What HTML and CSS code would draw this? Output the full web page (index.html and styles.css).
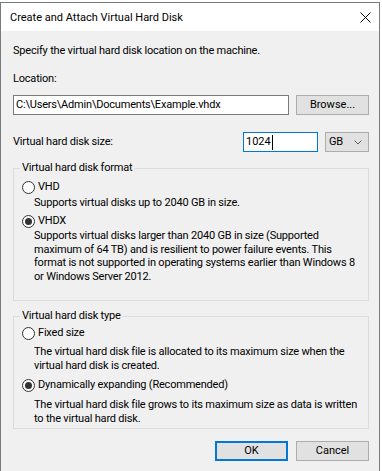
FILE: index.html
```html
<!DOCTYPE html>
<html>
<head>
<meta charset="utf-8">
<link rel="stylesheet" href="styles.css">
</head>
<body>
<div class="window">
  <div class="titlebar">
    <span class="title">Create and Attach Virtual Hard Disk</span>
    <svg class="close" width="11" height="11" viewBox="0 0 11 11"><path d="M0.5 0.5 L10.5 10.5 M10.5 0.5 L0.5 10.5" stroke="#000" stroke-width="1" fill="none"/></svg>
  </div>
  <div class="content">
    <p class="intro">Specify the virtual hard disk location on the machine.</p>
    <div class="lbl">Location:</div>
    <div class="row loc-row">
      <div class="textbox loc">C:\Users\Admin\Documents\Example.vhdx</div>
      <div class="btn browse">Browse...</div>
    </div>
    <div class="row size-row">
      <span class="size-label">Virtual hard disk size:</span>
      <div class="textbox size">1024<span class="caret"></span></div>
      <div class="combo"><span>GB</span><svg width="8" height="5" viewBox="0 0 8 5"><path d="M0.5 0.5 L4 4 L7.5 0.5" stroke="#606060" stroke-width="1" fill="none"/></svg></div>
    </div>
    <fieldset class="group format">
      <legend>Virtual hard disk format</legend>
      <div class="opt first"><span class="radio"></span><span>VHD</span></div>
      <div class="desc d1">Supports virtual disks up to 2040 GB in size.</div>
      <div class="opt second"><span class="radio checked"></span><span>VHDX</span></div>
      <div class="desc d2">Supports virtual disks larger than 2040 GB in size (Supported<br>maximum of 64 TB) and is resilient to power failure events. This<br>format is not supported in operating systems earlier than Windows 8<br>or Windows Server 2012.</div>
    </fieldset>
    <fieldset class="group type">
      <legend>Virtual hard disk type</legend>
      <div class="opt first"><span class="radio"></span><span>Fixed size</span></div>
      <div class="desc d3">The virtual hard disk file is allocated to its maximum size when the<br>virtual hard disk is created.</div>
      <div class="opt third"><span class="radio checked"></span><span>Dynamically expanding (Recommended)</span></div>
      <div class="desc d4">The virtual hard disk file grows to its maximum size as data is written<br>to the virtual hard disk.</div>
    </fieldset>
    <div class="buttons">
      <div class="btn ok">OK</div>
      <div class="btn">Cancel</div>
    </div>
  </div>
</div>
</body>
</html>
```
FILE: styles.css
```css
html, body {
  margin: 0;
  padding: 0;
  background: #ffffff;
}
body {
  padding-top: 2px;
  font-family: Roboto, "Liberation Sans", Arial, sans-serif;
  font-size: 11px;
  color: #000;
}
.window {
  width: 380px;
  box-sizing: border-box;
  border: 1px solid #7a7a7a;
  border-bottom: 2px solid #6a6a6a;
  background: #f0f0f0;
}
.titlebar {
  height: 28px;
  background: #fff;
  display: flex;
  align-items: center;
  justify-content: space-between;
  padding: 0 8px 0 9px;
}
.title {
  line-height: 14px;
  padding-top: 1px;
}
.close {
  display: block;
}
.content {
  padding: 0 10px 10px 12px;
  letter-spacing: -0.2px;
}
.intro {
  margin: 13px 0 0;
  line-height: 14px;
  white-space: nowrap;
}
.lbl {
  margin-top: 14px;
  line-height: 14px;
}
.row {
  display: flex;
  align-items: center;
}
.loc-row {
  margin-top: 9px;
  gap: 7px;
}
.textbox {
  box-sizing: border-box;
  height: 20px;
  border: 1px solid #7a7a7a;
  background: #fff;
  line-height: 18px;
  padding: 0 2px;
  white-space: nowrap;
  overflow: hidden;
}
.loc {
  width: 276px;
}
.btn {
  box-sizing: border-box;
  width: 73px;
  height: 20px;
  border: 1px solid #adadad;
  background: #e1e1e1;
  text-align: center;
  line-height: 18px;
  letter-spacing: 0;
}
.size-row {
  margin-top: 17px;
}
.size-label {
  flex: 1;
  line-height: 14px;
}
.size {
  width: 75px;
  border-color: #0078d7;
  display: flex;
  align-items: center;
  letter-spacing: 0;
}
.caret {
  display: inline-block;
  width: 1px;
  height: 15px;
  background: #000;
  margin-left: 1px;
}
.combo {
  box-sizing: border-box;
  width: 44px;
  height: 20px;
  margin-left: 7px;
  border: 1px solid #adadad;
  background: #e1e1e1;
  display: flex;
  align-items: center;
  justify-content: space-between;
  padding: 0 6px 0 3px;
  line-height: 18px;
}
.combo svg {
  display: block;
}
.group {
  margin: 9px 0 0;
  border: 1px solid #dcdcdc;
  padding: 5px 8px 17px 8px;
  min-width: 0;
}
.group legend {
  padding: 0 2px;
  margin-left: -2px;
  line-height: 14px;
}
.type {
  margin-top: 8px;
  padding-top: 3px;
  padding-bottom: 3px;
}
.opt {
  display: flex;
  align-items: center;
  line-height: 14px;
  gap: 3px;
}
.radio {
  box-sizing: border-box;
  width: 13px;
  height: 13px;
  border: 1px solid #333;
  border-radius: 50%;
  background: #fff;
  display: flex;
  align-items: center;
  justify-content: center;
}
.radio.checked::after {
  content: "";
  width: 7px;
  height: 7px;
  border-radius: 50%;
  background: #333;
}
.desc {
  padding-left: 12px;
  line-height: 13.5px;
  white-space: nowrap;
}
.d1 { margin-top: 2px; line-height: 14px; }
.second { margin-top: 4px; }
.d2 { margin-top: 1px; }
.d3 { margin-top: 5px; }
.third { margin-top: 6px; }
.d4 { margin-top: 6px; }
.buttons {
  display: flex;
  justify-content: flex-end;
  gap: 8px;
  margin-top: 12px;
}
.ok {
  border: 2px solid #0078d7;
  line-height: 16px;
}
```
